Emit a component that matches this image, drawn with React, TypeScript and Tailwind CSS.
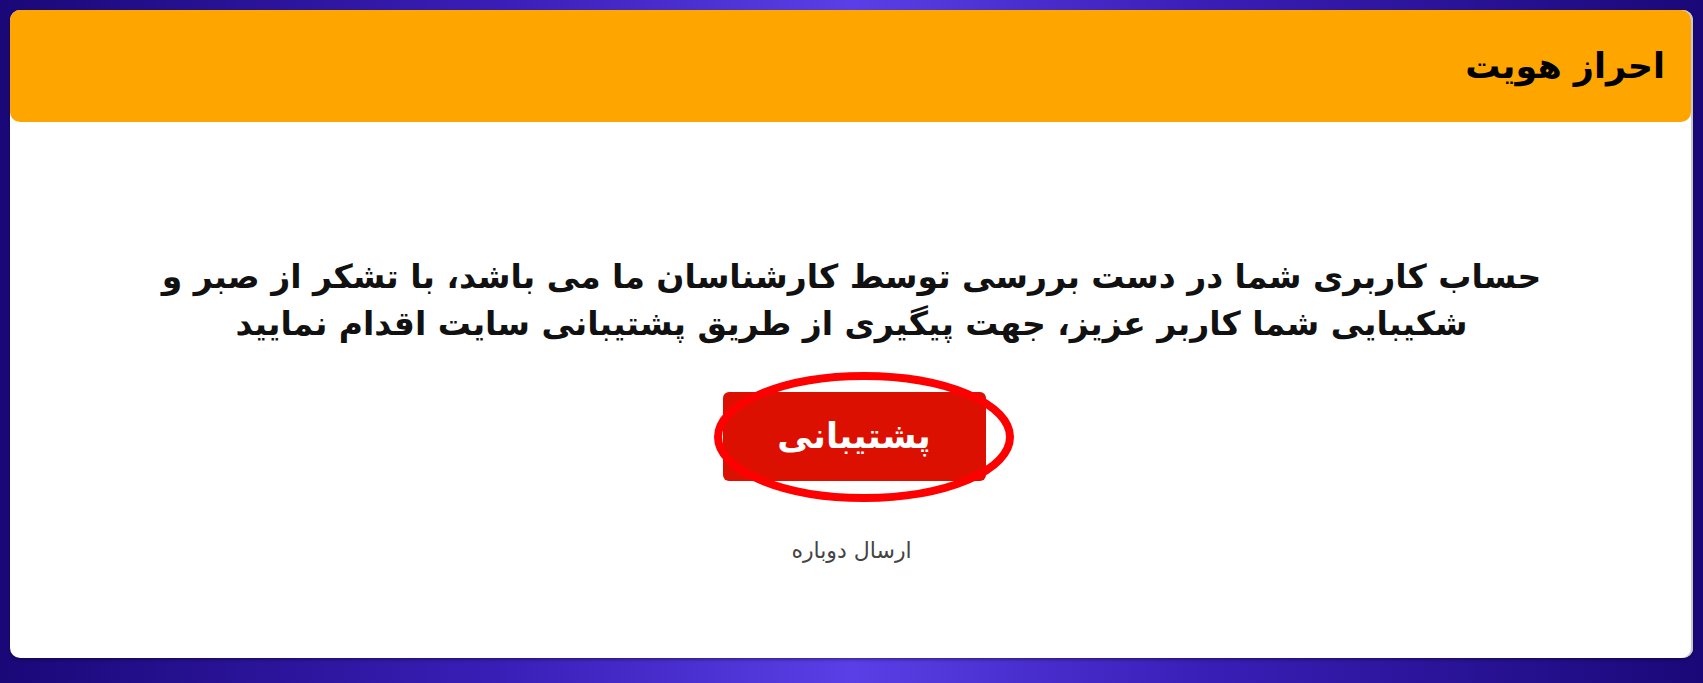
import React from "react";

export default function App() {
  return (
    <div
      className="h-[683px] w-full px-[10px] pt-[10px] pb-[25px] bg-[linear-gradient(90deg,#1a0878_0%,#3a1fb8_30%,#5a3fe6_50%,#3a1fb8_70%,#1a0878_100%)]"
      style={{ fontFamily: '"DejaVu Sans", sans-serif' }}
      dir="rtl"
    >
      <div className="flex h-full flex-col rounded-[10px] bg-white shadow-[inset_-2px_0_0_#c8c8c8,0_2px_3px_rgba(0,0,0,0.3)]">
        <div className="mr-[2px] flex h-[112px] items-center rounded-[10px] bg-[#ffa500] pl-[30px] pr-[26px]">
          <h1 className="text-[35px] font-bold text-black leading-none">احراز هویت</h1>
        </div>
        <div className="flex flex-col items-center pt-[131px]">
          <p className="text-center text-[33px] font-bold leading-[47px] text-[#111]">
            حساب کاربری شما در دست بررسی توسط کارشناسان ما می باشد، با تشکر از صبر و
            <br />
            شکیبایی شما کاربر عزیز، جهت پیگیری از طریق پشتیبانی سایت اقدام نمایید
          </p>
          <div className="relative mt-[45px] ml-[5px]">
            <button className="flex h-[89px] w-[263px] items-center justify-center rounded-[6px] bg-[#dc1000] text-[35px] font-bold text-white">
              پشتیبانی
            </button>
            <svg
              className="pointer-events-none absolute left-[-10px] top-[-20px]"
              width="302"
              height="130"
              viewBox="0 0 302 130"
            >
              <ellipse cx="151" cy="65" rx="146" ry="61" fill="none" stroke="#ff0000" strokeWidth="8" />
            </svg>
          </div>
          <div className="mt-[54px] text-[22px] leading-[32px] text-[#444]">ارسال دوباره</div>
        </div>
      </div>
    </div>
  );
}
